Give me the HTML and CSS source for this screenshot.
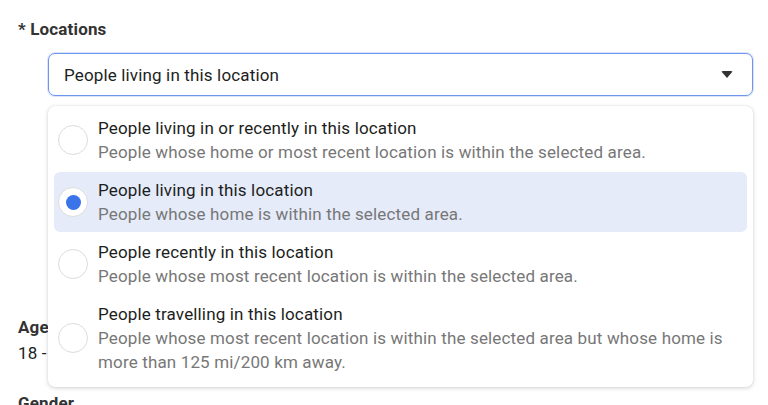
FILE: index.html
```html
<!DOCTYPE html>
<html>
<head>
  <meta charset="utf-8"/>
  <title>Audience</title>
  <link rel="stylesheet" href="styles.css">
</head>
<body>

<div class="field">
  <div class="label">* Locations</div>
  <div class="select-wrap">
    <div class="select">
      <span>People living in this location</span>
      <span class="caret"></span>
    </div>

    <ul class="menu">
      <li class="option">
        <span class="radio"></span>
        <div class="text">
          <div class="title">People living in or recently in this location</div>
          <div class="desc">People whose home or most recent location is within the selected area.</div>
        </div>
      </li>
      <li class="option selected">
        <span class="radio"></span>
        <div class="text">
          <div class="title">People living in this location</div>
          <div class="desc">People whose home is within the selected area.</div>
        </div>
      </li>
      <li class="option">
        <span class="radio"></span>
        <div class="text">
          <div class="title">People recently in this location</div>
          <div class="desc">People whose most recent location is within the selected area.</div>
        </div>
      </li>
      <li class="option">
        <span class="radio"></span>
        <div class="text">
          <div class="title">People travelling in this location</div>
          <div class="desc">People whose most recent location is within the selected area but whose home is more than 125 mi/200 km away.</div>
        </div>
      </li>
    </ul>
  </div>
  <!-- search box and map sit under the open menu -->
  <div class="covered"></div>
</div>

<div class="field">
  <div class="label">Age</div>
  <div class="value">18 - 65+</div>
</div>

<div class="field">
  <div class="label">Gender</div>
  <div class="value">All genders</div>
</div>

</body>
</html>
```

FILE: styles.css
```css
body {
  margin: 0;
  padding: 19px 18px;
  font-family: Roboto, "Liberation Sans", sans-serif;
  font-size: 17px;
  letter-spacing: 0.15px;
  color: #1c1e21;
  background: #fff;
}
.label {
  font-weight: bold;
  color: #333;
  line-height: 20px;
}
.value {
  margin-top: 6px;
  line-height: 20px;
}
.field {
  margin-bottom: 30px;
}
.select-wrap {
  position: relative;
  margin-left: 30px;
  margin-top: 14px;
  width: 705px;
}
.select {
  display: flex;
  align-items: center;
  justify-content: space-between;
  height: 43px;
  box-sizing: border-box;
  padding: 0 19px 0 15px;
  border: 1px solid #6d95ec;
  border-radius: 7px;
  box-shadow: 0 0 0 1px rgba(109, 149, 236, 0.25);
}
.caret {
  width: 0;
  height: 0;
  border-left: 6px solid transparent;
  border-right: 6px solid transparent;
  border-top: 7px solid #333;
  border-radius: 2px;
}
.covered {
  height: 191px;
}
.menu {
  position: absolute;
  top: 53px;
  left: 0;
  right: 0;
  margin: 0;
  padding: 4px 6px 7px;
  list-style: none;
  background: #fff;
  border-radius: 7px;
  box-shadow: 0 1px 4px rgba(0, 0, 0, 0.18), 0 0 1px rgba(0, 0, 0, 0.12);
  z-index: 2;
}
.option {
  display: flex;
  align-items: center;
  padding: 6px 0 6px 4px;
  border-radius: 6px;
  margin-bottom: 2px;
}
.option:last-child {
  margin-bottom: 0;
}
.option.selected {
  background: #e5ebf9;
}
.radio {
  flex: none;
  width: 28px;
  height: 28px;
  border: 1px solid #dcdcdc;
  border-radius: 50%;
  background: #fff;
  margin-right: 10px;
  display: flex;
  align-items: center;
  justify-content: center;
}
.selected .radio::after {
  content: "";
  width: 15px;
  height: 15px;
  border-radius: 50%;
  background: #3b74e8;
}
.text {
  line-height: 24px;
  padding-right: 20px;
}
.title {
  color: #1c1e21;
}
.desc {
  color: #777;
}
```
